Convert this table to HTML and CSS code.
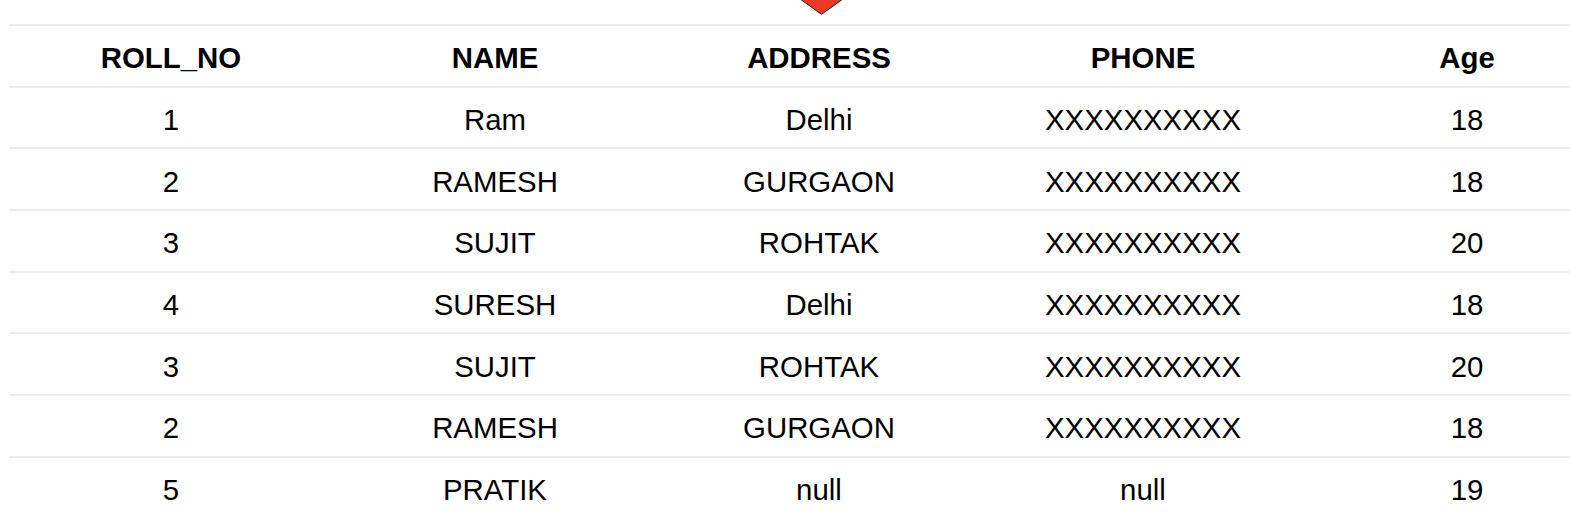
FILE: index.html
```html
<!DOCTYPE html>
<html>
<head>
<meta charset="utf-8">
<link rel="stylesheet" href="styles.css">
</head>
<body>
<div class="page">
  <svg class="marker" width="46" height="16" viewBox="0 0 46 16">
    <polygon points="0,-1 43,-1 21.5,14.3" fill="#e93b24" stroke="#2a1a16" stroke-width="1"/>
  </svg>
  <table class="grid">
    <thead>
      <tr><th>ROLL_NO</th><th>NAME</th><th>ADDRESS</th><th>PHONE</th><th>Age</th></tr>
    </thead>
    <tbody>
      <tr><td>1</td><td>Ram</td><td>Delhi</td><td>XXXXXXXXXX</td><td>18</td></tr>
      <tr><td>2</td><td>RAMESH</td><td>GURGAON</td><td>XXXXXXXXXX</td><td>18</td></tr>
      <tr><td>3</td><td>SUJIT</td><td>ROHTAK</td><td>XXXXXXXXXX</td><td>20</td></tr>
      <tr><td>4</td><td>SURESH</td><td>Delhi</td><td>XXXXXXXXXX</td><td>18</td></tr>
      <tr><td>3</td><td>SUJIT</td><td>ROHTAK</td><td>XXXXXXXXXX</td><td>20</td></tr>
      <tr><td>2</td><td>RAMESH</td><td>GURGAON</td><td>XXXXXXXXXX</td><td>18</td></tr>
      <tr><td>5</td><td>PRATIK</td><td>null</td><td>null</td><td>19</td></tr>
    </tbody>
  </table>
</div>
</body>
</html>
```

FILE: styles.css
```css
html, body {
  margin: 0;
  padding: 0;
  background: #ffffff;
  overflow: hidden;
}
.page {
  position: relative;
  padding: 24px 0 0 9px;
  font-family: "Liberation Sans", Arial, sans-serif;
  color: #000;
}
.marker {
  position: absolute;
  left: 800px;
  top: 0;
  display: block;
}
.grid {
  border-collapse: separate;
  border-spacing: 0;
  table-layout: fixed;
  width: 1620px;
  font-size: 29.4px;
}
.grid th, .grid td {
  width: 324px;
  height: 55.7px;
  padding: 4px 0 0 0;
  text-align: center;
  vertical-align: middle;
  border-top: 2px solid #ececec;
  line-height: 1;
}
.grid th {
  font-weight: bold;
}
.grid td {
  font-weight: normal;
}
```
